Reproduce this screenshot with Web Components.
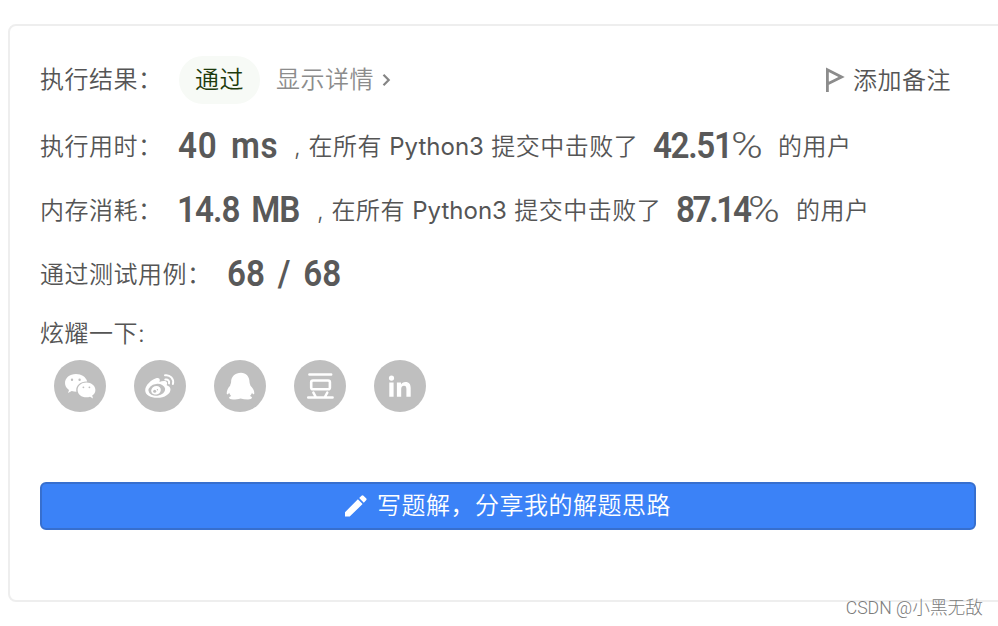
<!DOCTYPE html>
<html lang="zh-CN">
<head>
<meta charset="utf-8">
<title>执行结果</title>
<style>
  html, body {
    margin: 0;
    height: 100%;
    overflow: hidden;
    background: #fff;
  }
  body {
    font-family: Inter, "Noto Sans CJK SC", sans-serif;
    font-size: 24px;
    font-weight: 350;
    letter-spacing: 0.5px;
    color: #555;
  }
</style>
</head>
<body>
<submission-page></submission-page>

<script>
class MetricValue extends HTMLElement {
    constructor() {
        super();
        this.attachShadow({ mode: 'open' });

        const template = document.createElement('template');
        template.innerHTML = `
        <style>
        :host {
            display: flex;
            flex: none;
            width: var(--w, auto);
            font-family: Roboto, sans-serif;
            font-size: 36.500px;
            font-weight: 600;
            line-height: 48px;
            letter-spacing: var(--track, 0);
            word-spacing: var(--gap, 0);
            white-space: nowrap;
            color: #595959;
        }
        .num {
            flex: none;
            width: var(--num, auto);
            transform: scaleX(.91);
            transform-origin: 0 50%;
        }
        .unit {
            font-weight: 350;
            letter-spacing: 0;
            transform: scaleX(1.180);
            transform-origin: 0 50%;
        }
        </style>
        <span class="num"><slot></slot></span>
        `;
        this.shadowRoot.appendChild(template.content.cloneNode(true));

        if (this.hasAttribute('unit')) {
            const unit = document.createElement('span');
            unit.className = 'unit';
            unit.textContent = this.getAttribute('unit');
            this.shadowRoot.appendChild(unit);
        }
    }
}

class ResultRow extends HTMLElement {
    constructor() {
        super();
        this.attachShadow({ mode: 'open' });

        const template = document.createElement('template');
        template.innerHTML = `
        <style>
        :host {
            display: flex;
            align-items: center;
            height: 64px;
            white-space: nowrap;
        }
        .label {
            flex: none;
            width: var(--label, 138px);
            line-height: 32px;
            padding-top: var(--drop, 2px);
        }
        </style>
        <div class="label"></div>
        <slot></slot>
        `;
        this.shadowRoot.appendChild(template.content.cloneNode(true));
        this.shadowRoot.querySelector('.label').textContent = this.getAttribute('label');
    }
}

class ResultStatus extends HTMLElement {
    constructor() {
        super();
        this.attachShadow({ mode: 'open' });

        const template = document.createElement('template');
        template.innerHTML = `
        <style>
        :host {
            display: flex;
            flex: 1;
            align-items: center;
            margin-left: 1px;
        }
        .pill {
            box-sizing: border-box;
            width: 81px;
            height: 48px;
            line-height: 48px;
            padding-left: 16px;
            border-radius: 24px;
            background: #f7faf6;
            color: #1d3a0c;
        }
        .detail {
            margin-left: 16px;
            line-height: 32px;
            color: #8c8c8c;
        }
        .arrow {
            margin-left: 8px;
        }
        .note {
            display: flex;
            align-items: center;
            margin: 0 25px 0 auto;
            line-height: 32px;
        }
        .note span {
            padding-top: 1px;
        }
        .note svg {
            margin-right: 8px;
        }
        </style>
        <span class="pill">通过</span>
        <span class="detail">显示详情</span>
        <svg class="arrow" width="10" height="14" viewBox="0 0 10 14" fill="none" stroke="#858585" stroke-width="2.200">
            <path d="M1.500 1.800L6.700 7l-5.200 5.200"/>
        </svg>
        <span class="note">
            <svg width="20" height="26" viewBox="0 0 20 26" fill="none" stroke="#8c8c8c" stroke-width="2.800">
                <path d="M2.400 25V2.800L16.600 10 2.400 17"/>
            </svg>
            <span>添加备注</span>
        </span>
        `;
        this.shadowRoot.appendChild(template.content.cloneNode(true));
    }
}

const icons = {
    wechat: `
        <path fill="#fff" fill-rule="evenodd" d="M22 14c-6.300 0-11 3.900-11 9 0 2.900 1.500 5.200 4 6.900l-1 3.100 3.700-1.900c1.500.4 2.900.6 4.700.6-.1-.6-.2-1.100-.2-1.700 0-5 4.400-8.600 10-8.600h1C32 17 27.400 14 22 14zM18 18.500a1.200 1.200 0 110 2.400 1.200 1.200 0 010-2.400zm7.600 0a1.200 1.200 0 110 2.400 1.200 1.200 0 010-2.400z"/>
        <path fill="#fff" fill-rule="evenodd" d="M32.400 22.500c-5 0-8.800 3.300-8.800 7.400s3.800 7.400 8.800 7.400c1.300 0 2.400-.2 3.600-.6l3 1.700-.8-2.800c2-1.400 3.200-3.400 3.200-5.700 0-4.100-4-7.400-9-7.400zm-3 3.900a.9.900 0 110 1.800.9.900 0 010-1.800zm6 0a.9.900 0 110 1.800.9.900 0 010-1.800z"/>`,
    weibo: `
        <path fill="#fff" d="M22 18.300c2.200-.8 3.800-.2 3.800 1.800 0 .6-.2 1.200-.4 1.800 3.300-1.400 7.600-1.600 7.700 1.100 0 .7-.3 1.500-.4 2.200 2.200.7 3.800 2 3.800 4.200 0 4.300-5.800 8.400-13.300 8.400-6.600 0-12-3-12-7.600 0-4.800 6.200-10.600 10.800-11.900z"/>
        <ellipse cx="22.800" cy="29.800" rx="8.400" ry="5.900" transform="rotate(-7 22.800 29.800)" fill="#bfbfbf"/>
        <ellipse cx="22" cy="30.300" rx="4.900" ry="4.200" transform="rotate(-20 22 30.300)" fill="#fff"/>
        <circle cx="20.700" cy="31.200" r="1.500" fill="#bfbfbf"/>
        <circle cx="23.400" cy="29.800" r=".7" fill="#bfbfbf"/>
        <path fill="none" stroke="#fff" stroke-width="2" stroke-linecap="round" d="M31 15.300c5-.9 9.300 3.600 7.900 8.800M31.300 19.500c2.700-.5 4.400 1.500 3.700 3.900"/>`,
    qq: `
        <path fill="#fff" d="M27 12.800c-5.800 0-9.900 3.800-9.900 9.100 0 1.500-.8 2.200-1 3.800-2.300 2.400-3.400 5-3.400 7.600 0 1.800 1.200 1.300 2.500-.6.5 1.500 1 2.400 2 3.300-3.300 1-2.700 3.400 1.800 3.400 3 0 5.300-.4 7.500-1 2.200.6 4.700 1 7.500 1 4.500 0 5.200-2.400 2-3.400 1-.9 1.500-1.800 2-3.300 1.200 1.900 2.300 2 2.300.3 0-2.700-1.500-5.200-3.800-7.300-.3-1.600-1-2.300-1-3.800 0-5.300-3.500-9.100-8.500-9.100z"/>`,
    douban: `
        <path fill="none" stroke="#fff" stroke-width="2.500" stroke-linecap="round" stroke-linejoin="round" d="M15.400 14.400h21.800M14.200 37.600h24.400M19.400 32.600l2.400 4.400M33.300 32.600L30.900 37"/>
        <rect x="17.200" y="20.500" width="18.700" height="8.800" rx="1.800" fill="none" stroke="#fff" stroke-width="2.600"/>`,
    linkedin: `
        <circle cx="17.500" cy="18.100" r="2.600" fill="#fff"/>
        <path fill="#fff" d="M15.300 22.400h4.300v14.400h-4.300zM22.900 22.400H27v2c.8-1.500 2.300-2.400 4.400-2.400 4 0 5.300 2.500 5.300 6.200v8.600h-4.300v-7.700c0-2.200-.6-3.400-2.400-3.400-2 0-2.800 1.400-2.800 3.500v7.600h-4.300z"/>`
};

class ShareIcon extends HTMLElement {
    constructor() {
        super();
        this.attachShadow({ mode: 'open' });

        const template = document.createElement('template');
        template.innerHTML = `
        <style>
        :host {
            display: block;
            width: 52px;
            height: 52px;
            border-radius: 50%;
            background: #bfbfbf;
        }
        svg {
            display: block;
        }
        </style>
        <svg width="52" height="52" viewBox="0 0 52 52">${icons[this.getAttribute('name')]}</svg>
        `;
        this.shadowRoot.appendChild(template.content.cloneNode(true));
    }
}

class WriteButton extends HTMLElement {
    constructor() {
        super();
        this.attachShadow({ mode: 'open' });

        const template = document.createElement('template');
        template.innerHTML = `
        <style>
        :host {
            box-sizing: border-box;
            display: flex;
            align-items: center;
            justify-content: center;
            width: 936px;
            height: 48px;
            border: 2px solid #376fce;
            border-radius: 6px;
            background: #3b82f7;
            color: #fff;
            line-height: 32px;
        }
        svg {
            margin-right: 10px;
        }
        </style>
        <svg width="22" height="22" viewBox="0 0 22 22" fill="#fff">
            <path d="M0 17.200L12.900 4.300l4.700 4.700L4.700 21.600H0zM14.200 3L16.500.7q1-1 2 0l2.600 2.600q1 1 0 2L18.800 7.700z"/>
        </svg>
        <span><slot></slot></span>
        `;
        this.shadowRoot.appendChild(template.content.cloneNode(true));
    }
}

class SubmissionPage extends HTMLElement {
    constructor() {
        super();
        this.attachShadow({ mode: 'open' });

        const template = document.createElement('template');
        template.innerHTML = `
        <style>
        :host {
            display: block;
            position: relative;
            box-sizing: border-box;
            height: 626px;
            padding: 24px 0 0 8px;
            overflow: hidden;
        }
        .card {
            box-sizing: border-box;
            width: 1000px;
            height: 578px;
            padding: 22px 30px 0;
            border: 2px solid #eee;
            border-radius: 8px;
        }
        .first {
            --drop: 0;
            width: 936px;
            margin-bottom: 2px;
        }
        .text {
            flex: none;
            width: var(--w, auto);
            line-height: 32px;
            padding-top: 2px;
        }
        .lang {
            font-weight: 400;
            letter-spacing: 0;
        }
        .share {
            margin-top: 10px;
            line-height: 35px;
            height: 36px;
        }
        .icons {
            display: flex;
            gap: 28px;
            margin: 8px 0 70px 14px;
        }
        .watermark {
            position: absolute;
            right: 15px;
            bottom: 6px;
            font-family: Roboto, "Noto Sans CJK SC", sans-serif;
            font-size: 17.700px;
            font-weight: 300;
            line-height: 24px;
            letter-spacing: 0;
            color: #7c7c7c;
            white-space: nowrap;
        }
        </style>
        <div class="card">
            <result-row class="first" label="执行结果："><result-status></result-status></result-row>
            <result-row label="执行用时：">
                <metric-value style="--w: 116px; --track: 0.8px; --gap: 5px">40 ms</metric-value>
                <span class="text" style="--w: 359px">, 在所有 <span class="lang">Python3</span> 提交中击败了</span>
                <metric-value style="--w: 125px; --num: 78px; --track: -1.5px" unit="%">42.51</metric-value>
                <span class="text">的用户</span>
            </result-row>
            <result-row label="内存消耗：" style="--label: 137px">
                <metric-value style="--w: 140px; --track: -1.1px; --gap: 5px">14.8 MB</metric-value>
                <span class="text" style="--w: 359px">, 在所有 <span class="lang">Python3</span> 提交中击败了</span>
                <metric-value style="--w: 120px; --num: 72px; --track: -2.6px" unit="%">87.14</metric-value>
                <span class="text">的用户</span>
            </result-row>
            <result-row label="通过测试用例：" style="--label: 187px">
                <metric-value style="--gap: 5px">68 / 68</metric-value>
            </result-row>
            <div class="share">炫耀一下:</div>
            <div class="icons">
                <share-icon name="wechat"></share-icon>
                <share-icon name="weibo"></share-icon>
                <share-icon name="qq"></share-icon>
                <share-icon name="douban"></share-icon>
                <share-icon name="linkedin"></share-icon>
            </div>
            <write-button>写题解，分享我的解题思路</write-button>
        </div>
        <div class="watermark">CSDN @小黑无敌</div>
        `;
        this.shadowRoot.appendChild(template.content.cloneNode(true));
    }
}

customElements.define('metric-value', MetricValue);
customElements.define('result-row', ResultRow);
customElements.define('result-status', ResultStatus);
customElements.define('share-icon', ShareIcon);
customElements.define('write-button', WriteButton);
customElements.define('submission-page', SubmissionPage);
</script>
</body>
</html>
